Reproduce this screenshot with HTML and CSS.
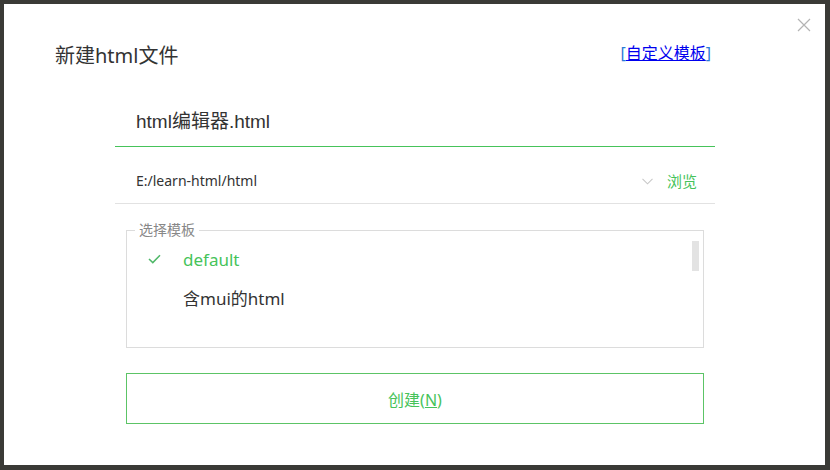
FILE: index.html
```html
<!DOCTYPE html>
<html lang="zh">
<head>
<meta charset="utf-8">
<title>新建html文件</title>
<link rel="stylesheet" href="styles.css">
</head>
<body>
<div class="dialog">
  <button class="close" aria-label="关闭">
    <svg width="14" height="14" viewBox="0 0 14 14"><path d="M1 1L13 13M13 1L1 13" stroke="#b4b4b4" stroke-width="1.2" fill="none"/></svg>
  </button>
  <div class="header">
    <h1 class="title">新建html文件</h1>
    <span class="custom">[<a href="#">自定义模板</a>]</span>
  </div>
  <div class="form">
    <div class="name-row">html编辑器.html</div>
    <div class="path-row">
      <span class="path">E:/learn-html/html</span>
      <svg class="chev" width="11" height="7" viewBox="0 0 11 7"><path d="M0.5 0.8L5.5 5.8L10.5 0.8" stroke="#c8c8c8" stroke-width="1.1" fill="none"/></svg>
      <span class="browse">浏览</span>
    </div>
    <fieldset class="templates">
      <legend>选择模板</legend>
      <div class="item active">
        <span class="check"><svg width="13" height="10" viewBox="0 0 13 10"><path d="M1 5L4.8 8.6L12 1.2" stroke="#4fb868" stroke-width="1.5" fill="none"/></svg></span>
        <span>default</span>
      </div>
      <div class="item">
        <span class="check"></span>
        <span>含mui的html</span>
      </div>
      <div class="thumb"></div>
    </fieldset>
    <button class="create">创建(<u>N</u>)</button>
  </div>
</div>
</body>
</html>
```
FILE: styles.css
```css
html, body {
  margin: 0;
  padding: 0;
}
body {
  background: #3a3a36;
  width: 830px;
  height: 470px;
  overflow: hidden;
  font-family: "Noto Sans", "Noto Sans CJK SC", sans-serif;
}
.dialog {
  position: relative;
  box-sizing: border-box;
  margin: 4px 0 0 4px;
  width: 821px;
  height: 461px;
  background: #ffffff;
  padding-top: 40px;
}
.close {
  position: absolute;
  top: 14px;
  right: 14px;
  border: 0;
  background: none;
  padding: 0;
  width: 14px;
  height: 14px;
}
.close svg { display: block; }
.header {
  display: flex;
  justify-content: space-between;
  align-items: center;
  margin-left: 51px;
  width: 656px;
  height: 24px;
}
.title {
  margin: 0;
  font-size: 20px;
  font-weight: normal;
  color: #333333;
  line-height: 24px;
}
.custom {
  font-size: 16px;
  color: #2a7bd6;
  line-height: 20px;
  margin-top: -6px;
}
.custom a {
  color: #0000ee;
  text-decoration: underline;
}
.form {
  margin: 29px 0 0 111px;
  width: 600px;
}
.name-row {
  height: 50px;
  box-sizing: border-box;
  border-bottom: 1px solid #46c35a;
  padding-left: 21px;
  font-family: "Liberation Sans", "Noto Sans CJK SC", sans-serif;
  font-size: 19px;
  line-height: 50px;
  color: #333333;
}
.path-row {
  display: flex;
  align-items: center;
  box-sizing: border-box;
  height: 57px;
  padding: 11px 18px 0 21px;
  border-bottom: 1px solid #e2e2e2;
  font-size: 14px;
  color: #333333;
}
.path { flex: 1; }
.chev { margin-right: 14px; margin-top: 1px; }
.browse {
  font-size: 15px;
  color: #46c35a;
}
.templates {
  position: relative;
  margin: 17px 11px 0 11px;
  padding: 1px 0 31px 0;
  border: 1px solid #dcdcdc;
  min-width: 0;
}
.templates legend {
  margin-left: 8px;
  padding: 0 4px;
  font-size: 14px;
  line-height: 18px;
  color: #888888;
}
.item {
  display: flex;
  align-items: center;
  height: 38px;
  padding-left: 21px;
  font-size: 17px;
  color: #333333;
}
.item.active { color: #46c35a; }
.check {
  width: 35px;
  display: flex;
  align-items: center;
}
.thumb {
  position: absolute;
  top: 2px;
  right: 4px;
  width: 7px;
  height: 30px;
  background: #e3e3e3;
}
.create {
  display: block;
  box-sizing: border-box;
  margin: 25px 0 0 11px;
  width: 578px;
  height: 51px;
  background: #ffffff;
  border: 1px solid #5cc466;
  font-family: "Noto Sans", "Noto Sans CJK SC", sans-serif;
  font-size: 16px;
  color: #46c35a;
  padding: 0;
}
```
